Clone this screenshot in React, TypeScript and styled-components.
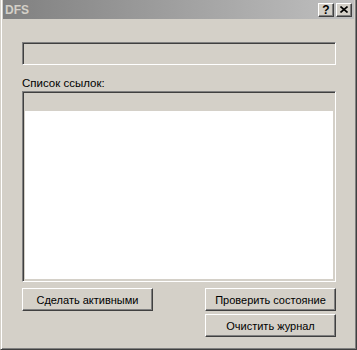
import React from 'react';
import { createGlobalStyle, styled } from 'styled-components';

const GlobalStyle = createGlobalStyle`
  html, body {
    margin: 0;
    padding: 0;
    background: #d4d0c8;
  }
  body {
    font-family: Tahoma, "Liberation Sans", "DejaVu Sans", sans-serif;
  }
`;

const Window = styled.div`
  box-sizing: border-box;
  width: 357px;
  height: 350px;
  background: #d4d0c8;
  border-left: 1px solid #d4d0c8;
  border-right: 1px solid #404040;
  border-bottom: 1px solid #404040;
  box-shadow: inset 1px 0 #fff, inset -1px -1px #808080;
  padding: 0 2px 2px 2px;
  display: flex;
  flex-direction: column;
`;

const TitleBar = styled.div`
  height: 19px;
  display: flex;
  align-items: center;
  justify-content: space-between;
  padding: 0 2px 0 2px;
  background: linear-gradient(to right, #808080, #c0c0c0);
`;

const Title = styled.span`
  font-family: "Liberation Sans", sans-serif;
  font-weight: bold;
  font-size: 12px;
  color: #d4d0c8;
`;

const Caps = styled.div`
  display: flex;
  gap: 2px;
`;

const CapButton = styled.div`
  box-sizing: border-box;
  width: 16px;
  height: 14px;
  background: #d4d0c8;
  border-top: 1px solid #fff;
  border-left: 1px solid #fff;
  border-right: 1px solid #404040;
  border-bottom: 1px solid #404040;
  box-shadow: inset -1px -1px #808080;
  display: flex;
  align-items: center;
  justify-content: center;
  font-family: "Liberation Sans", sans-serif;
  font-weight: bold;
  font-size: 12px;
  line-height: 1;
  color: #000;
`;

const Body = styled.div`
  flex: 1;
  display: flex;
  flex-direction: column;
  padding: 23px 18px 0 19px;
`;

const Sunken = styled.div<{ $h: number }>`
  box-sizing: border-box;
  height: ${({ $h }) => $h}px;
  background: #d4d0c8;
  border-top: 1px solid #808080;
  border-left: 1px solid #808080;
  border-right: 1px solid #fff;
  border-bottom: 1px solid #fff;
  box-shadow: inset 1px 1px #404040, inset -1px -1px #d4d0c8;
  display: flex;
  flex-direction: column;
`;

const Label = styled.div`
  font-family: "Liberation Sans", sans-serif;
  font-size: 11.5px;
  color: #000;
  margin-top: 10px;
  height: 16px;
  line-height: 16px;
`;

const ListHeader = styled.div`
  height: 17px;
  margin: 2px 2px 0 2px;
  background: #d4d0c8;
`;

const ListArea = styled.div`
  flex: 1;
  margin: 0 2px 2px 2px;
  background: #fff;
`;

const Buttons = styled.div`
  display: flex;
  justify-content: space-between;
  margin-top: 6px;
`;

const Column = styled.div`
  display: flex;
  flex-direction: column;
  gap: 3px;
`;

const Button = styled.div`
  box-sizing: border-box;
  width: 131px;
  height: 23px;
  background: #d4d0c8;
  border-top: 1px solid #fff;
  border-left: 1px solid #fff;
  border-right: 1px solid #404040;
  border-bottom: 1px solid #404040;
  box-shadow: inset -1px -1px #808080;
  display: flex;
  align-items: center;
  justify-content: center;
  font-family: "Liberation Sans", sans-serif;
  font-size: 11px;
  color: #000;
`;

export default function App() {
  return (
    <>
      <GlobalStyle />
      <Window>
        <TitleBar>
          <Title>DFS</Title>
          <Caps>
            <CapButton>?</CapButton>
            <CapButton>
              <svg width="8" height="7" viewBox="0 0 8 7">
                <path d="M0.5 0.5 L7.5 6.5 M7.5 0.5 L0.5 6.5" stroke="#000" strokeWidth="1.6" />
              </svg>
            </CapButton>
          </Caps>
        </TitleBar>
        <Body>
          <Sunken $h={23} />
          <Label>Список ссылок:</Label>
          <Sunken $h={191}>
            <ListHeader />
            <ListArea />
          </Sunken>
          <Buttons>
            <Button>Сделать активными</Button>
            <Column>
              <Button>Проверить состояние</Button>
              <Button>Очистить журнал</Button>
            </Column>
          </Buttons>
        </Body>
      </Window>
    </>
  );
}
